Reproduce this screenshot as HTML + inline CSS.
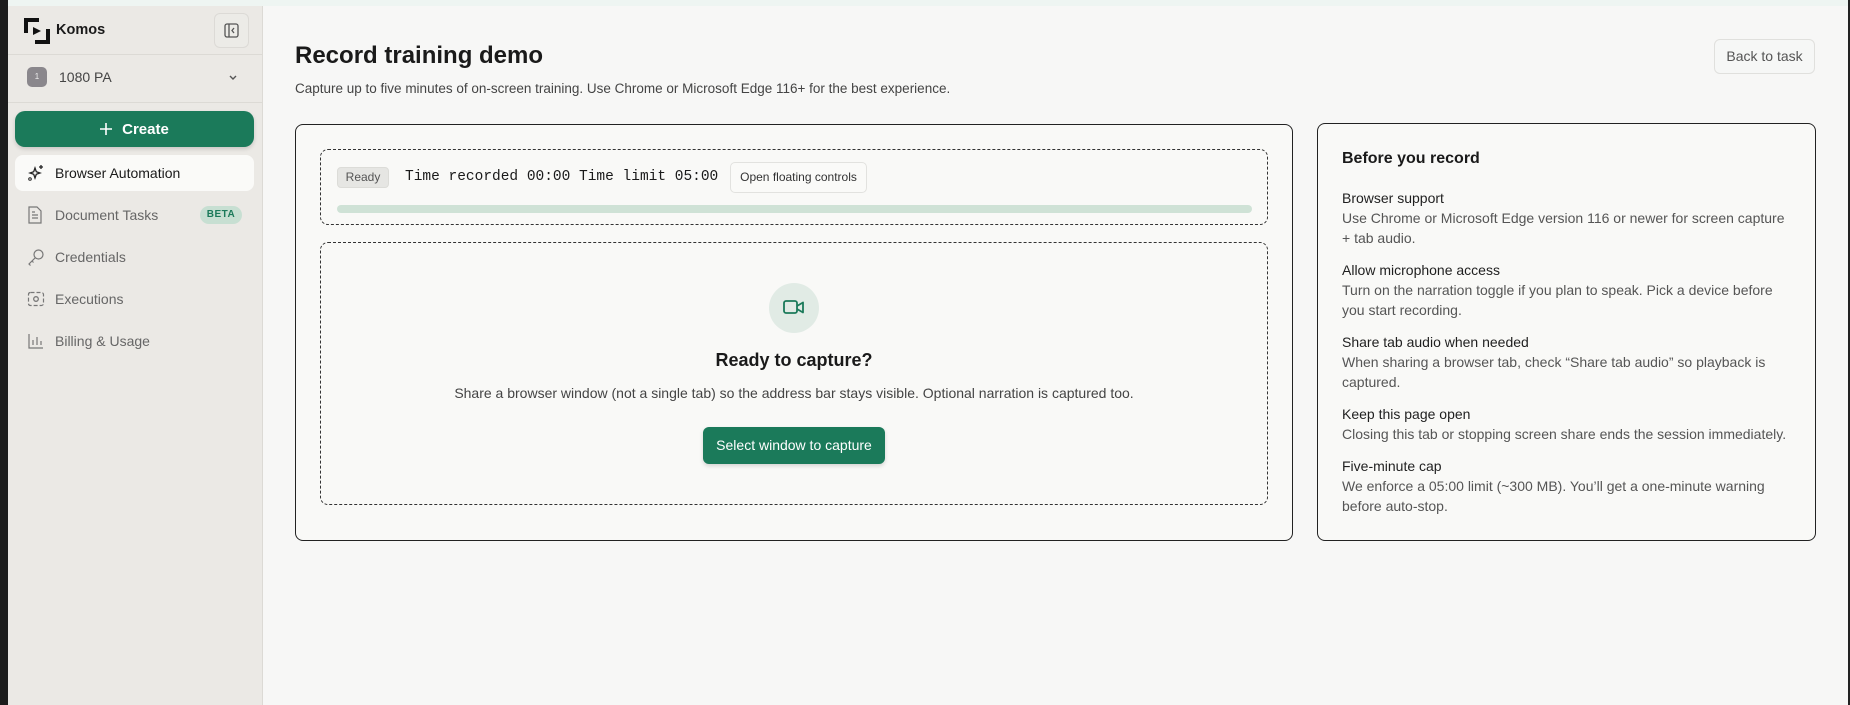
<!DOCTYPE html>
<html><head><meta charset="utf-8">
<style>
*{box-sizing:border-box;margin:0;padding:0}
body{width:1850px;height:705px;overflow:hidden;background:#f7f7f6;font-family:"Liberation Sans",sans-serif;color:#1a1a1a;position:relative}
.abs{position:absolute}
.strip{left:0;top:0;width:8px;height:705px;background:#1c1c1c}
.topline{left:8px;top:0;width:1842px;height:6px;background:#eef5f2}
.side{left:8px;top:6px;width:255px;height:699px;background:#ebe9e5;border-right:1px solid #dcdad5}
.navitem{position:absolute;left:15px;width:239px;height:36px;display:flex;align-items:center;font-size:14px;color:#666}
.navitem svg{position:absolute;left:12px}
.navitem span{position:absolute;left:40px}
.card{border:1px solid #222;border-radius:8px;background:#f9f9f7}
.dash{border:1px dashed #333;border-radius:8px}
.rt{font-size:14px;line-height:20px}
.rt b{font-weight:normal;color:#1f1f1f;display:block}
.rt p{color:#555}
</style></head><body>
<div class="abs strip"></div>
<div class="abs topline"></div>
<div class="abs side"></div>
<svg class="abs" style="left:24px;top:18px" width="26" height="26" viewBox="0 0 26 26">
<path d="M2 15V2h13" fill="none" stroke="#111" stroke-width="4"/>
<path d="M24 11v13H11" fill="none" stroke="#111" stroke-width="4"/>
<path d="M9 9l8 4-8 4z" fill="#111"/>
</svg>
<div class="abs" style="left:56px;top:22px;font-size:14.5px;font-weight:bold">Komos</div>
<div class="abs" style="left:214px;top:13px;width:35px;height:35px;border:1px solid #dcdad6;border-radius:6px;background:#ecebe7"></div>
<svg class="abs" style="left:224px;top:23px" width="15" height="15" viewBox="0 0 15 15"><rect x="1" y="1" width="13" height="13" rx="2" fill="none" stroke="#555" stroke-width="1.3"/><path d="M5 1v13M10 5l-2 2.5 2 2.5" fill="none" stroke="#555" stroke-width="1.3"/></svg>
<div class="abs" style="left:8px;top:54px;width:254px;height:1px;background:#dcdad5"></div>
<div class="abs" style="left:27px;top:67px;width:20px;height:20px;border-radius:5px;background:#8a878c;color:#eee;font-size:8px;text-align:center;line-height:20px">1</div>
<div class="abs" style="left:59px;top:69px;font-size:14px;color:#444">1080 PA</div>
<svg class="abs" style="left:228px;top:74px" width="10" height="8" viewBox="0 0 10 8"><path d="M2 2l3 3 3-3" fill="none" stroke="#555" stroke-width="1.4"/></svg>
<div class="abs" style="left:8px;top:102px;width:254px;height:1px;background:#dcdad5"></div>
<div class="abs" style="left:15px;top:111px;width:239px;height:36px;border-radius:10px;background:#1b7a5a;color:#fff;font-weight:bold;font-size:15px;display:flex;align-items:center;justify-content:center;box-shadow:0 2px 4px rgba(0,0,0,.15)"><svg width="12" height="12" viewBox="0 0 12 12" style="margin-right:10px"><path d="M6 0v12M0 6h12" stroke="#fff" stroke-width="1.6"/></svg>Create</div>
<div class="navitem" style="top:155px;background:#fafaf8;border-radius:8px;color:#1a1a1a">
<svg width="18" height="18" viewBox="0 0 18 18"><path d="M8 4l1.3 3.7L13 9l-3.7 1.3L8 14l-1.3-3.7L3 9l3.7-1.3z" fill="none" stroke="#222" stroke-width="1.3"/><path d="M14 1v4M12 3h4" stroke="#222" stroke-width="1.3"/><circle cx="3" cy="15" r="1.3" fill="none" stroke="#222"/></svg><span>Browser Automation</span></div>
<div class="navitem" style="top:197px">
<svg width="16" height="18" viewBox="0 0 16 18"><path d="M2 1h8l4 4v12H2z" fill="none" stroke="#777" stroke-width="1.2"/><path d="M5 9h6M5 12h6M5 6h3" stroke="#777" stroke-width="1.2"/></svg><span>Document Tasks</span>
<div style="position:absolute;left:185px;top:9px;width:42px;height:18px;border-radius:9px;background:#c7dfd2;color:#1b7a5a;font-size:10px;font-weight:bold;text-align:center;line-height:18px;letter-spacing:.5px">BETA</div></div>
<div class="navitem" style="top:239px">
<svg width="18" height="18" viewBox="0 0 18 18"><circle cx="11.5" cy="6.5" r="4.5" fill="none" stroke="#777" stroke-width="1.2"/><path d="M8.5 9.5L2 16l1.5 1.5M5 13l1.5 1.5" fill="none" stroke="#777" stroke-width="1.2"/></svg><span>Credentials</span></div>
<div class="navitem" style="top:281px">
<svg width="18" height="18" viewBox="0 0 18 18"><rect x="1.5" y="2.5" width="15" height="13" rx="2" fill="none" stroke="#777" stroke-width="1.2" stroke-dasharray="4 2"/><circle cx="9" cy="9" r="2.3" fill="none" stroke="#777" stroke-width="1.3"/></svg><span>Executions</span></div>
<div class="navitem" style="top:323px">
<svg width="18" height="18" viewBox="0 0 18 18"><path d="M2 2v14h14M6 13V8M10 13V5M14 13V9" fill="none" stroke="#777" stroke-width="1.2"/></svg><span>Billing &amp; Usage</span></div>

<div class="abs" style="left:295px;top:42px;font-size:24px;font-weight:bold;color:#1a1a1a">Record training demo</div>
<div class="abs" style="left:295px;top:81px;font-size:13.5px;color:#444">Capture up to five minutes of on-screen training. Use Chrome or Microsoft Edge 116+ for the best experience.</div>
<div class="abs" style="left:1714px;top:39px;width:101px;height:35px;border:1px solid #e0e0dd;border-radius:6px;background:#f6f7f6;font-size:14px;color:#555;text-align:center;line-height:33px">Back to task</div>

<div class="abs card" style="left:295px;top:124px;width:998px;height:417px"></div>
<div class="abs dash" style="left:320px;top:149px;width:948px;height:76px"></div>
<div class="abs" style="left:337px;top:167px;width:52px;height:21px;border-radius:4px;background:#e6e6e3;border:1px solid #dcdcd8;font-size:12px;color:#555;text-align:center;line-height:19px">Ready</div>
<div class="abs" style="left:405px;top:169px;font-family:'Liberation Mono',monospace;font-size:14.5px;color:#1a1a1a;white-space:pre">Time recorded 00:00 Time limit 05:00</div>
<div class="abs" style="left:730px;top:162px;width:137px;height:31px;border:1px solid #e2e2df;border-radius:5px;font-size:12px;color:#333;text-align:center;line-height:29px;background:#fafaf8">Open floating controls</div>
<div class="abs" style="left:337px;top:205px;width:915px;height:8px;border-radius:4px;background:#cfe2d6"></div>

<div class="abs dash" style="left:320px;top:242px;width:948px;height:263px"></div>
<div class="abs" style="left:769px;top:283px;width:50px;height:50px;border-radius:50%;background:#e1ebe5"></div>
<svg class="abs" style="left:783px;top:299px" width="22" height="17" viewBox="0 0 22 17"><rect x="1" y="2" width="13" height="12" rx="2" fill="none" stroke="#1b7a5a" stroke-width="1.8"/><path d="M14 7l6-3.5v10L14 10" fill="none" stroke="#1b7a5a" stroke-width="1.8" stroke-linejoin="round"/></svg>
<div class="abs" style="left:320px;width:948px;top:350px;text-align:center;font-size:18px;font-weight:bold">Ready to capture?</div>
<div class="abs" style="left:320px;width:948px;top:385px;text-align:center;font-size:14px;color:#444">Share a browser window (not a single tab) so the address bar stays visible. Optional narration is captured too.</div>
<div class="abs" style="left:703px;top:427px;width:182px;height:37px;border-radius:6px;background:#1b7a5a;color:#fff;font-size:14px;text-align:center;line-height:37px;box-shadow:0 2px 4px rgba(0,0,0,.15)">Select window to capture</div>

<div class="abs card" style="left:1317px;top:123px;width:499px;height:418px"></div>
<div class="abs" style="left:1342px;top:150px;font-size:16px;font-weight:bold">Before you record</div>
<div class="abs rt" style="left:1342px;top:188px;width:445px">
<b>Browser support</b><p>Use Chrome or Microsoft Edge version 116 or newer for screen capture + tab audio.</p>
<b style="margin-top:12px">Allow microphone access</b><p>Turn on the narration toggle if you plan to speak. Pick a device before you start recording.</p>
<b style="margin-top:12px">Share tab audio when needed</b><p>When sharing a browser tab, check “Share tab audio” so playback is captured.</p>
<b style="margin-top:12px">Keep this page open</b><p>Closing this tab or stopping screen share ends the session immediately.</p>
<b style="margin-top:12px">Five-minute cap</b><p>We enforce a 05:00 limit (~300 MB). You’ll get a one-minute warning before auto-stop.</p>
</div>
<div class="abs" style="left:1848px;top:0;width:2px;height:705px;background:#222"></div>
</body></html>
